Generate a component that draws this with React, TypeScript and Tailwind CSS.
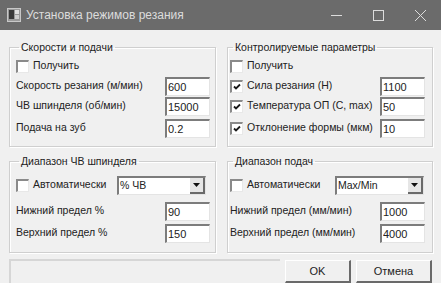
import { ReactNode } from "react";

type RowProps = {
  label: string;
  value: string;
  checked?: boolean;
};

function CheckBox({ checked }: { checked?: boolean }) {
  return (
    <span className="flex h-[13px] w-[13px] shrink-0 items-center justify-center border-t-2 border-l-2 border-r border-b border-t-[#8a8a8a] border-l-[#8a8a8a] border-r-[#e8e8e8] border-b-[#e8e8e8] bg-white">
      {checked && (
        <svg width="8" height="8" viewBox="0 0 8 8">
          <polyline
            points="1,3.5 3,5.5 7,1.5"
            fill="none"
            stroke="#1a1a1a"
            strokeWidth="1.8"
          />
        </svg>
      )}
    </span>
  );
}

function Field({ value }: { value: string }) {
  return (
    <input
      readOnly
      value={value}
      className="h-[19px] w-[45px] border-t-2 border-l-2 border-r border-b border-t-[#7c7c7c] border-l-[#7c7c7c] border-r-[#e4e4e4] border-b-[#e4e4e4] bg-white pl-[1px] text-[11px] leading-[15px] text-[#222] outline-none"
    />
  );
}

function Combo({ value }: { value: string }) {
  return (
    <div className="flex h-[19px] w-[89px] items-stretch border-t-2 border-l-2 border-r border-b border-t-[#7c7c7c] border-l-[#7c7c7c] border-r-[#e4e4e4] border-b-[#e4e4e4] bg-white">
      <span className="flex-1 pl-[1px] leading-[15px]">{value}</span>
      <span className="flex w-[15px] items-center justify-center border-r-2 border-b-2 border-r-[#6a6a6a] border-b-[#6a6a6a] bg-[#e6e6e6]">
        <svg width="7" height="4" viewBox="0 0 7 4">
          <polygon points="0,0 7,0 3.5,4" fill="#111" />
        </svg>
      </span>
    </div>
  );
}

function Group({
  title,
  className,
  children,
}: {
  title: string;
  className: string;
  children: ReactNode;
}) {
  return (
    <fieldset
      className={`border border-[#cfcfcf] shadow-[inset_1px_1px_0_#fff,1px_1px_0_#fff] ${className}`}
    >
      <legend className="ml-[3px] px-[2px] leading-[13px]">{title}</legend>
      {children}
    </fieldset>
  );
}

function InputRow({ label, value, checked }: RowProps) {
  return (
    <div className="flex h-[20px] items-center justify-between">
      <div className="flex items-center gap-[4px]">
        {checked !== undefined && <CheckBox checked={checked} />}
        <span>{label}</span>
      </div>
      <Field value={value} />
    </div>
  );
}

function GetRow() {
  return (
    <div className="flex h-[16px] items-center gap-[4px]">
      <CheckBox />
      <span>Получить</span>
    </div>
  );
}

function TitleBar() {
  return (
    <div className="flex h-[30px] items-center bg-[#6b6b6b] text-[12px] text-[#dcdcdc]">
      <svg width="14" height="14" viewBox="0 0 14 14" className="ml-[7px]">
        <rect x="0.5" y="0.5" width="13" height="13" fill="#9a9a9a" stroke="#c8c8c8" />
        <rect x="2" y="2" width="5" height="9" fill="#3a3a3a" />
        <rect x="8" y="2" width="4" height="4" fill="#e0e0e0" />
        <rect x="8" y="7" width="4" height="4" fill="#d0d0d0" />
      </svg>
      <span className="ml-[5px] flex-1">Установка режимов резания</span>
      <div className="flex h-full">
        <div className="flex w-[42px] items-center justify-center">
          <svg width="11" height="11" viewBox="0 0 11 11">
            <line x1="0" y1="5.5" x2="11" y2="5.5" stroke="#dcdcdc" />
          </svg>
        </div>
        <div className="flex w-[42px] items-center justify-center">
          <svg width="11" height="11" viewBox="0 0 11 11">
            <rect x="0.5" y="0.5" width="10" height="10" fill="none" stroke="#dcdcdc" />
          </svg>
        </div>
        <div className="flex w-[42px] items-center justify-center">
          <svg width="11" height="11" viewBox="0 0 11 11">
            <line x1="0" y1="0" x2="11" y2="11" stroke="#dcdcdc" />
            <line x1="11" y1="0" x2="0" y2="11" stroke="#dcdcdc" />
          </svg>
        </div>
      </div>
    </div>
  );
}

export default function App() {
  return (
    <div className="h-[283px] w-[441px] overflow-hidden bg-[#f0f0f0] font-['Liberation_Sans',Arial,sans-serif] text-[10.5px] text-[#222]">
      <TitleBar />
      <div className="px-[9px] pt-[11px]">
        <div className="grid grid-cols-[207px_206px] gap-[11px]">
          <Group title="Скорости и подачи" className="h-[106px] pr-[5px] pl-[6px]">
            <div className="mt-[4px] flex flex-col">
              <GetRow />
              <div className="mt-[2px]">
                <InputRow label="Скорость резания (м/мин)" value="600" />
              </div>
              <InputRow label="ЧВ шпинделя (об/мин)" value="15000" />
              <div className="mt-[2px]">
                <InputRow label="Подача на зуб" value="0.2" />
              </div>
            </div>
          </Group>
          <Group title="Контролируемые параметры" className="h-[106px] pr-[7px] pl-[2px]">
            <div className="mt-[4px] flex flex-col">
              <GetRow />
              <div className="mt-[2px]">
                <InputRow label="Сила резания (Н)" value="1100" checked />
              </div>
              <InputRow label="Температура ОП (С, max)" value="50" checked />
              <div className="mt-[2px]">
                <InputRow label="Отклонение формы (мкм)" value="10" checked />
              </div>
            </div>
          </Group>
        </div>

        <div className="mt-[8px] grid grid-cols-[207px_206px] gap-[11px]">
          <Group title="Диапазон ЧВ шпинделя" className="h-[98px] pr-[5px] pl-[6px]">
            <div className="mt-[7px] flex h-[20px] items-center justify-between pr-[4px]">
              <div className="flex items-center gap-[4px]">
                <CheckBox />
                <span>Автоматически</span>
              </div>
              <Combo value="% ЧВ" />
            </div>
            <div className="mt-[6px]">
              <InputRow label="Нижний предел %" value="90" />
            </div>
            <div className="mt-[2px]">
              <InputRow label="Верхний предел %" value="150" />
            </div>
          </Group>
          <Group title="Диапазон подач" className="h-[98px] pr-[7px] pl-[2px]">
            <div className="mt-[7px] flex h-[20px] items-center justify-between pr-[1px]">
              <div className="flex items-center gap-[4px]">
                <CheckBox />
                <span>Автоматически</span>
              </div>
              <Combo value="Max/Min" />
            </div>
            <div className="mt-[6px]">
              <InputRow label="Нижний предел (мм/мин)" value="1000" />
            </div>
            <div className="mt-[2px]">
              <InputRow label="Верхний предел (мм/мин)" value="4000" />
            </div>
          </Group>
        </div>

        <div className="mt-[6px] flex items-start">
          <div className="h-[30px] w-[271px] border-t-2 border-l-2 border-t-[#d6d6d6] border-l-[#d6d6d6]" />
          <button className="ml-[5px] mt-[1px] h-[23px] w-[66px] border border-r-2 border-b-2 border-t-white border-l-white border-r-[#6a6a6a] border-b-[#6a6a6a] bg-[#f0f0f0] text-[11px]">
            OK
          </button>
          <button className="ml-[5px] mt-[1px] h-[23px] w-[76px] border border-r-2 border-b-2 border-t-white border-l-white border-r-[#6a6a6a] border-b-[#6a6a6a] bg-[#f0f0f0] text-[11px]">
            Отмена
          </button>
        </div>
      </div>
    </div>
  );
}
